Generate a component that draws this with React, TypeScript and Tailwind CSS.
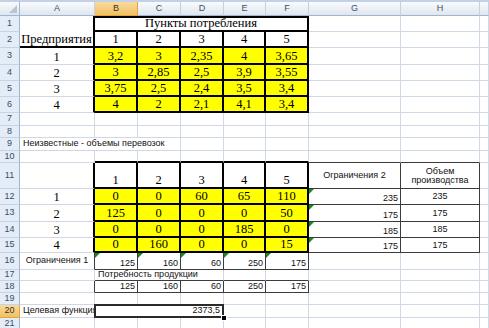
import React from "react";

const SERIF = "[font-family:'Liberation_Serif',serif] text-[12.5px] leading-none text-black";
const SANS = "[font-family:'Liberation_Sans',sans-serif] text-[9px] leading-none text-[#111]";
const GL = "border-r border-b border-[#d0d7e5]";
const CENTER = "flex items-end justify-center pb-[1px]";
const RIGHT = "flex items-end justify-end pr-[2px] pb-[1px]";
const BOX = "border-r-2 border-b-2 border-black";
const YEL = "bg-[#ffff00] border-r-2 border-b-2 border-black";
const THIN = "border-r border-b border-[#3c3c3c]";
const LEFT_BLACK = "border-r-2 border-r-black border-b border-b-[#d0d7e5]";

const RowHead = ({ n, active }: { n: number; active?: boolean }) => (
  <div
    className={
      active
        ? "flex items-center justify-center bg-linear-to-b from-[#f9d99f] to-[#f1c15f] border-r border-b border-r-[#e3a43f] border-b-[#e3a43f] text-[9px] text-[#3b3020] [font-family:'Liberation_Sans',sans-serif]"
        : "flex items-center justify-center bg-[#e4ecf7] border-r border-b border-r-[#9eb6ce] border-b-[#c5d3e4] text-[9px] text-[#3b4e68] [font-family:'Liberation_Sans',sans-serif]"
    }
  >
    {n}
  </div>
);

const Green = () => (
  <span className="absolute left-0 top-0 w-0 h-0 border-t-[5px] border-r-[5px] border-t-[#1b8a1b] border-r-transparent" />
);

const blanks = (count: number, key: string) =>
  Array.from({ length: count }, (_, i) => <div key={key + i} className={GL} />);

const prices = [
  ["3,2", "3", "2,35", "4", "3,65"],
  ["3", "2,85", "2,5", "3,9", "3,55"],
  ["3,75", "2,5", "2,4", "3,5", "3,4"],
  ["4", "2", "2,1", "4,1", "3,4"],
];

const plan = [
  ["0", "0", "60", "65", "110"],
  ["125", "0", "0", "0", "50"],
  ["0", "0", "0", "185", "0"],
  ["0", "160", "0", "0", "15"],
];
const limits = ["235", "175", "185", "175"];
const demand = ["125", "160", "60", "250", "175"];

export default function App() {
  return (
    <div className="w-[489px] h-[328px] overflow-hidden bg-white">
      <div className="h-[2px] bg-[#c3d1e4]" />
      <div className="grid grid-cols-[20px_75px_43px_43px_43px_42px_43px_92px_79px_9px] grid-rows-[14px_16px_16px_17px_16px_16px_16px_13px_12px_13px_12px_26px_16px_17px_16px_15px_17px_11px_12px_12px_13px_12px]">
        {/* column headers */}
        <div className="relative bg-linear-to-b from-[#f9fbfd] to-[#dfe6ef] border-r border-b border-r-[#9eb6ce] border-b-[#9eb6ce]">
          <span className="absolute right-[2px] bottom-[2px] w-0 h-0 border-l-[8px] border-b-[8px] border-l-transparent border-b-[#b6c4d6]" />
        </div>
        {["A", "B", "C", "D", "E", "F", "G", "H", ""].map((c) => (
          <div
            key={"h" + c}
            className={
              c === "B"
                ? "flex items-center justify-center bg-linear-to-b from-[#f9d99f] to-[#f1c15f] border-r border-b border-r-[#e3a43f] border-b-[#e3a43f] text-[9px] text-[#3b3020] [font-family:'Liberation_Sans',sans-serif]"
                : "flex items-center justify-center bg-linear-to-b from-[#f9fbfd] to-[#dfe6ef] border-r border-b border-r-[#c5d1de] border-b-[#9eb6ce] text-[9px] text-[#3b4e68] [font-family:'Liberation_Sans',sans-serif]"
            }
          >
            {c}
          </div>
        ))}

        {/* row 1 */}
        <RowHead n={1} />
        <div className={`${SERIF} ${CENTER} ${BOX} row-span-2`}>Предприятия</div>
        <div className={`${SERIF} ${CENTER} ${BOX} border-t-2 col-span-5`}>Пункты потребления</div>
        {blanks(3, "r1")}

        {/* row 2 */}
        <RowHead n={2} />
        {[1, 2, 3, 4, 5].map((n) => (
          <div key={"r2" + n} className={`${SERIF} ${CENTER} ${BOX}`}>
            {n}
          </div>
        ))}
        {blanks(3, "r2g")}

        {/* rows 3-6 */}
        {prices.map((row, i) => (
          <React.Fragment key={"p" + i}>
            <RowHead n={i + 3} />
            <div className={`${SERIF} ${CENTER} ${LEFT_BLACK}`}>{i + 1}</div>
            {row.map((v, j) => (
              <div key={j} className={`${SERIF} ${CENTER} ${YEL}`}>
                {v}
              </div>
            ))}
            {blanks(3, "pg" + i)}
          </React.Fragment>
        ))}

        {/* rows 7-8 */}
        <RowHead n={7} />
        {blanks(9, "r7")}
        <RowHead n={8} />
        {blanks(9, "r8")}

        {/* row 9 */}
        <RowHead n={9} />
        <div className={`${SANS} col-span-3 flex items-end pl-[3px] pb-[2px] whitespace-nowrap ${GL}`}>
          Неизвестные - объемы перевозок
        </div>
        {blanks(6, "r9")}

        {/* row 10 */}
        <RowHead n={10} />
        <div className={GL} />
        {[0, 1, 2, 3, 4].map((n) => (
          <div key={"r10" + n} className="border-r border-r-[#d0d7e5] border-b-2 border-b-black" />
        ))}
        <div className="border-r border-r-[#d0d7e5] border-b border-b-[#3c3c3c]" />
        <div className="border-r border-r-[#d0d7e5] border-b border-b-[#3c3c3c]" />
        <div className={GL} />

        {/* row 11 */}
        <RowHead n={11} />
        <div className={LEFT_BLACK} />
        {[1, 2, 3, 4, 5].map((n) => (
          <div key={"r11" + n} className={`${SERIF} ${CENTER} ${BOX}`}>
            {n}
          </div>
        ))}
        <div className={`${SANS} flex items-center justify-center ${THIN}`}>Ограничения 2</div>
        <div className={`${SANS} flex flex-col items-center justify-center leading-[12px] ${THIN}`}>
          <span>Объем</span>
          <span>производства</span>
        </div>
        <div className={GL} />

        {/* rows 12-15 */}
        {plan.map((row, i) => (
          <React.Fragment key={"x" + i}>
            <RowHead n={i + 12} />
            <div className={`${SERIF} ${CENTER} ${LEFT_BLACK}`}>{i + 1}</div>
            {row.map((v, j) => (
              <div key={j} className={`${SERIF} ${CENTER} ${YEL}`}>
                {v}
              </div>
            ))}
            <div className={`${SANS} relative ${RIGHT} ${THIN}`}>
              <Green />
              {limits[i]}
            </div>
            <div className={`${SANS} flex items-center justify-center ${THIN}`}>{limits[i]}</div>
            <div className={GL} />
          </React.Fragment>
        ))}

        {/* row 16 */}
        <RowHead n={16} />
        <div className={`${SANS} flex items-start justify-center pt-[3px] border-r border-r-[#3c3c3c] border-b border-b-[#d0d7e5]`}>
          Ограничения 1
        </div>
        {demand.map((v, j) => (
          <div key={"r16" + j} className={`${SANS} relative ${RIGHT} ${THIN}`}>
            <Green />
            {v}
          </div>
        ))}
        {blanks(3, "r16g")}

        {/* row 17 */}
        <RowHead n={17} />
        <div className={GL} />
        <div className={`${SANS} col-span-3 flex items-end pl-[3px] pb-[1px] whitespace-nowrap border-r border-r-[#d0d7e5] border-b border-b-[#3c3c3c]`}>
          Потребность продукции
        </div>
        <div className="border-r border-r-[#d0d7e5] border-b border-b-[#3c3c3c]" />
        <div className="border-r border-r-[#d0d7e5] border-b border-b-[#3c3c3c]" />
        {blanks(3, "r17")}

        {/* row 18 */}
        <RowHead n={18} />
        <div className="border-r border-r-[#3c3c3c] border-b border-b-[#d0d7e5]" />
        {demand.map((v, j) => (
          <div key={"r18" + j} className={`${SANS} ${RIGHT} ${THIN}`}>
            {v}
          </div>
        ))}
        {blanks(3, "r18g")}

        {/* row 19 */}
        <RowHead n={19} />
        {blanks(9, "r19")}

        {/* row 20 */}
        <RowHead n={20} active />
        <div className={`${SANS} flex items-end pl-[3px] pb-[2px] whitespace-nowrap overflow-hidden ${GL}`}>
          Целевая функция
        </div>
        <div className={`${SANS} relative z-10 col-span-3 ${RIGHT} pr-[3px] pb-[2px] ${GL}`}>
          2373,5
          <span className="absolute -left-px -top-px -right-px -bottom-px border-2 border-[#2a2a2a]" />
          <span className="absolute -right-[4px] -bottom-[4px] w-[6px] h-[6px] bg-black border border-white" />
        </div>
        {blanks(5, "r20")}

        {/* row 21 */}
        <RowHead n={21} />
        {blanks(9, "r21")}
      </div>
    </div>
  );
}
